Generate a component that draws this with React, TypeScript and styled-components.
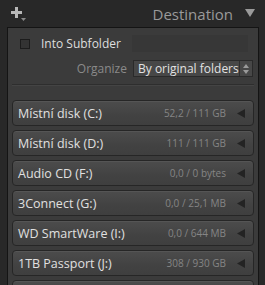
import React from "react";
import styled, { createGlobalStyle } from "styled-components";

const GlobalStyle = createGlobalStyle`
  html, body {
    margin: 0;
    padding: 0;
    background: #282828;
    font-family: "Open Sans", "Liberation Sans", sans-serif;
  }
`;

const Page = styled.div`
  width: 265px;
  height: 285px;
  overflow: hidden;
  background: #282828;
`;

const Header = styled.div`
  height: 27px;
  display: flex;
  align-items: center;
  padding: 0 10px 0 11px;
  box-sizing: border-box;
`;

const Title = styled.div`
  flex: 1;
  text-align: right;
  font-size: 15px;
  color: #9a9a9a;
  margin-right: 12px;
`;

const Panel = styled.div`
  margin: 0 6px 0 7px;
  border: 1px solid #141414;
  border-bottom: none;
  background: #3b3b3b;
  height: 258px;
  box-sizing: border-box;
  padding: 7px 4px 0 4px;
`;

const Options = styled.div`
  display: flex;
  flex-direction: column;
  gap: 8px;
  padding: 0 6px 7px 8px;
  border-bottom: 1px solid #2e2e2e;
  box-shadow: 0 1px 0 #444;
`;

const OptionRow = styled.div`
  display: flex;
  align-items: center;
  height: 17px;
`;

const Checkbox = styled.span`
  width: 8px;
  height: 8px;
  border: 1px solid #1c1c1c;
  background: #333;
  margin-right: 11px;
`;

const OptionLabel = styled.span<{ $dim?: boolean }>`
  font-size: 12px;
  color: ${(p) => (p.$dim ? "#8a8a8a" : "#dedede")};
  flex: ${(p) => (p.$dim ? "0 0 107px" : "1")};
  text-align: ${(p) => (p.$dim ? "right" : "left")};
  margin-right: ${(p) => (p.$dim ? "6px" : "0")};
`;

const TextField = styled.div`
  width: 116px;
  height: 17px;
  background: #373737;
`;

const Select = styled.div`
  width: 114px;
  height: 15px;
  background: #474747;
  border: 1px solid #2a2a2a;
  display: flex;
  align-items: center;
  font-size: 12px;
  color: #e2e2e2;
  padding-left: 4px;
  box-sizing: content-box;
`;

const SelectText = styled.span`
  flex: 1;
  white-space: nowrap;
  overflow: hidden;
`;

const SelectArrows = styled.span`
  width: 12px;
  height: 15px;
  border-left: 1px solid #2e2e2e;
  display: flex;
  align-items: center;
  justify-content: center;
`;

const DriveList = styled.div`
  display: flex;
  flex-direction: column;
  gap: 4px;
  margin-top: 15px;
  padding-bottom: 4px;
`;

const Drive = styled.div`
  height: 26px;
  box-sizing: border-box;
  border: 1px solid #262626;
  border-radius: 4px;
  background: linear-gradient(#4c4c4c, #424242 60%, #3f3f3f);
  box-shadow: inset 0 1px 0 #555;
  display: flex;
  align-items: center;
  padding: 0 8px 0 5px;
`;

const DriveName = styled.span`
  flex: 1;
  font-size: 12.5px;
  color: #e0e0e0;
  white-space: nowrap;
`;

const DriveSize = styled.span`
  font-size: 10px;
  color: #858585;
  margin-right: 11px;
`;

const PlusIcon = () => (
  <svg width="16" height="16" viewBox="0 0 16 16">
    <path d="M4 1h3v4h4v3H7v4H4V8H0V5h4z" fill="#b8b8b8" />
    <path d="M10 12h5l-2.5 3z" fill="#8a8a8a" />
  </svg>
);

const DownTriangle = () => (
  <svg width="10" height="9" viewBox="0 0 10 9">
    <path d="M0 0h10L5 8z" fill="#9a9a9a" />
  </svg>
);

const LeftTriangle = () => (
  <svg width="8" height="9" viewBox="0 0 8 9">
    <path d="M8 0v9L0 4.5z" fill="#232323" />
  </svg>
);

const UpDown = () => (
  <svg width="6" height="10" viewBox="0 0 6 10">
    <path d="M3 0l3 4H0zM3 10l3-4H0z" fill="#9a9a9a" />
  </svg>
);

const drives = [
  { name: "Místní disk (C:)", size: "52,2 / 111 GB" },
  { name: "Místní disk (D:)", size: "111 / 111 GB" },
  { name: "Audio CD (F:)", size: "0,0 / 0 bytes" },
  { name: "3Connect (G:)", size: "0,0 / 25,1 MB" },
  { name: "WD SmartWare (I:)", size: "0,0 / 644 MB" },
  { name: "1TB Passport (J:)", size: "308 / 930 GB" },
  { name: "", size: "" },
];

export default function App() {
  return (
    <Page>
      <GlobalStyle />
      <Header>
        <PlusIcon />
        <Title>Destination</Title>
        <DownTriangle />
      </Header>
      <Panel>
        <Options>
          <OptionRow>
            <Checkbox />
            <OptionLabel>Into Subfolder</OptionLabel>
            <TextField />
          </OptionRow>
          <OptionRow>
            <OptionLabel $dim>Organize</OptionLabel>
            <Select>
              <SelectText>By original folders</SelectText>
              <SelectArrows>
                <UpDown />
              </SelectArrows>
            </Select>
          </OptionRow>
        </Options>
        <DriveList>
          {drives.map((d, i) => (
            <Drive key={i}>
              <DriveName>{d.name}</DriveName>
              <DriveSize>{d.size}</DriveSize>
              {d.name && <LeftTriangle />}
            </Drive>
          ))}
        </DriveList>
      </Panel>
    </Page>
  );
}
